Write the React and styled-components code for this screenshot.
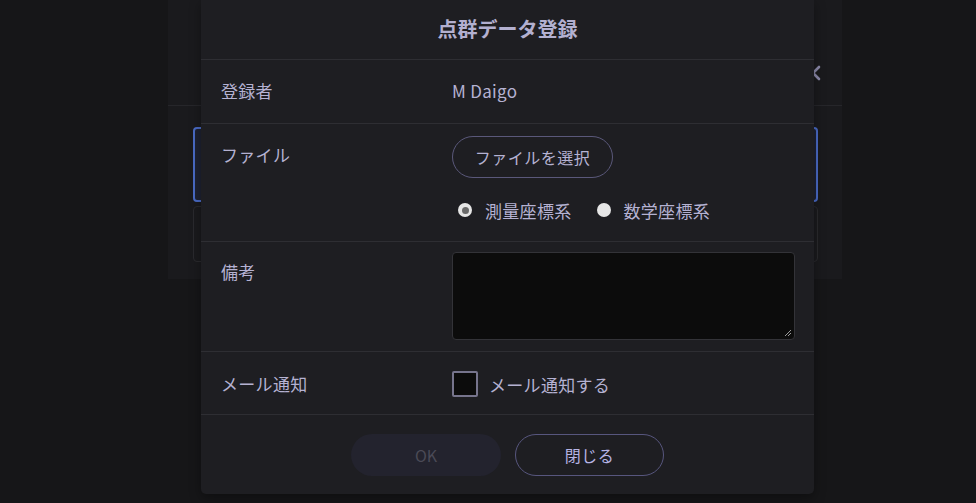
import styled, { createGlobalStyle } from "styled-components";

const Global = createGlobalStyle`
  html, body {
    margin: 0;
    padding: 0;
    background: #161618;
  }
  * {
    box-sizing: border-box;
  }
`;

const Page = styled.div`
  position: relative;
  width: 976px;
  height: 503px;
  overflow: hidden;
  background: #161618;
  font-family: "Noto Sans CJK JP", "Noto Sans", sans-serif;
`;

// dimmed page behind the dialog
const BackPanel = styled.div`
  margin-left: 168px;
  width: 674px;
  height: 279px;
  background: #1a1a1d;
  display: flex;
  flex-direction: column;
`;

const BackHeader = styled.div`
  height: 106px;
  border-bottom: 1px solid #26262a;
  display: flex;
  justify-content: flex-end;
  align-items: flex-start;
  padding: 64px 20px 0 0;
`;

const BackBody = styled.div`
  padding: 21px 24px 0 25px;
  display: flex;
  flex-direction: column;
  gap: 4px;
`;

const BackField = styled.div`
  height: ${(p) => p.h}px;
  border-radius: 4px;
  border: ${(p) => (p.active ? "2px solid #4a6bc6" : "1px solid #2a2a2e")};
  background: ${(p) => (p.active ? "#1e2232" : "transparent")};
`;

const Modal = styled.div`
  position: absolute;
  left: 201px;
  top: 0;
  width: 613px;
  background: #1e1e22;
  border-radius: 0 0 5px 5px;
  box-shadow: 0 4px 12px rgba(0, 0, 0, 0.35);
  color: #b5b2d2;
`;

const Title = styled.div`
  height: 60px;
  padding-bottom: 3px;
  border-bottom: 1px solid #2e2e33;
  display: flex;
  align-items: center;
  justify-content: center;
  font-size: 20px;
  font-weight: 700;
  color: #b3b0d0;
`;

const Row = styled.div`
  display: grid;
  grid-template-columns: 231px 1fr;
  padding: ${(p) => p.pad || "0"};
  padding-left: 20px;
  padding-right: 19px;
  border-bottom: 1px solid #2e2e33;
  align-items: ${(p) => (p.top ? "start" : "center")};
`;

const Label = styled.div`
  font-size: 17px;
  line-height: 24px;
  letter-spacing: 0.3px;
  padding-top: ${(p) => p.offset || 0}px;
`;

const Value = styled.div`
  font-size: 17px;
  line-height: 24px;
  letter-spacing: 0.3px;
`;

const Stack = styled.div`
  display: flex;
  flex-direction: column;
  align-items: flex-start;
  gap: 20px;
`;

const OutlineButton = styled.button`
  height: 42px;
  width: ${(p) => p.w}px;
  border-radius: 21px;
  border: 1px solid ${(p) => p.line || "#5a587a"};
  background: transparent;
  color: ${(p) => p.ink || "#b5b2d2"};
  font-family: inherit;
  font-size: 16px;
  letter-spacing: 0.5px;
  padding: 0;
`;

const SolidButton = styled.button`
  height: 42px;
  width: 150px;
  border-radius: 21px;
  border: none;
  background: #23232e;
  color: #4a4a56;
  font-family: inherit;
  font-size: 16px;
  padding: 0;
`;

const RadioGroup = styled.div`
  display: flex;
  align-items: center;
  gap: 25px;
  height: 24px;
  padding-left: 6px;
`;

const RadioItem = styled.label`
  display: flex;
  align-items: center;
  gap: 13px;
  font-size: 17px;
  letter-spacing: 0.3px;
`;

const RadioDot = styled.span`
  width: 14px;
  height: 14px;
  border-radius: 50%;
  background: #e6e6e6;
  display: flex;
  align-items: center;
  justify-content: center;
  &::after {
    content: "";
    width: 7px;
    height: 7px;
    border-radius: 50%;
    background: ${(p) => (p.checked ? "#6a6a6a" : "transparent")};
  }
`;

const TextArea = styled.div`
  position: relative;
  height: 88px;
  border: 1px solid #333338;
  border-radius: 4px;
  background: #0c0c0c;
`;

const Grip = styled.svg`
  position: absolute;
  right: 2px;
  bottom: 2px;
`;

const CheckRow = styled.label`
  display: flex;
  align-items: center;
  gap: 11px;
  font-size: 17px;
  letter-spacing: 0.3px;
`;

const CheckBox = styled.span`
  width: 26px;
  height: 26px;
  border: 2px solid #76748c;
  border-radius: 2px;
  background: #0c0c0c;
`;

const Footer = styled.div`
  display: flex;
  justify-content: center;
  gap: 14px;
  padding: 19px 0 18px;
`;

function App() {
  return (
    <Page>
      <Global />
      <BackPanel>
        <BackHeader>
          <svg width="18" height="18" viewBox="0 0 18 18">
            <path d="M3 3 L15 15 M15 3 L3 15" stroke="#8a88a8" strokeWidth="2.6" strokeLinecap="round" />
          </svg>
        </BackHeader>
        <BackBody>
          <BackField active h={75} />
          <BackField h={56} />
        </BackBody>
      </BackPanel>

      <Modal>
        <Title>点群データ登録</Title>

        <Row pad="19px 0 20px">
          <Label>登録者</Label>
          <Value>M Daigo</Value>
        </Row>

        <Row top pad="12px 0 19px">
          <Label offset={7}>ファイル</Label>
          <Stack>
            <OutlineButton w={161}>ファイルを選択</OutlineButton>
            <RadioGroup>
              <RadioItem>
                <RadioDot checked />
                測量座標系
              </RadioItem>
              <RadioItem>
                <RadioDot />
                数学座標系
              </RadioItem>
            </RadioGroup>
          </Stack>
        </Row>

        <Row top pad="10px 0 11px">
          <Label offset={8}>備考</Label>
          <TextArea>
            <Grip width="8" height="8" viewBox="0 0 8 8">
              <path d="M7 1 L1 7 M7 4 L4 7" stroke="#9a9a9a" strokeWidth="1" />
            </Grip>
          </TextArea>
        </Row>

        <Row pad="19px 0 17px">
          <Label>メール通知</Label>
          <CheckRow>
            <CheckBox />
            メール通知する
          </CheckRow>
        </Row>

        <Footer>
          <SolidButton>OK</SolidButton>
          <OutlineButton w={149} line="#57567e" ink="#b6b4e4">
            閉じる
          </OutlineButton>
        </Footer>
      </Modal>
    </Page>
  );
}

export default App;
